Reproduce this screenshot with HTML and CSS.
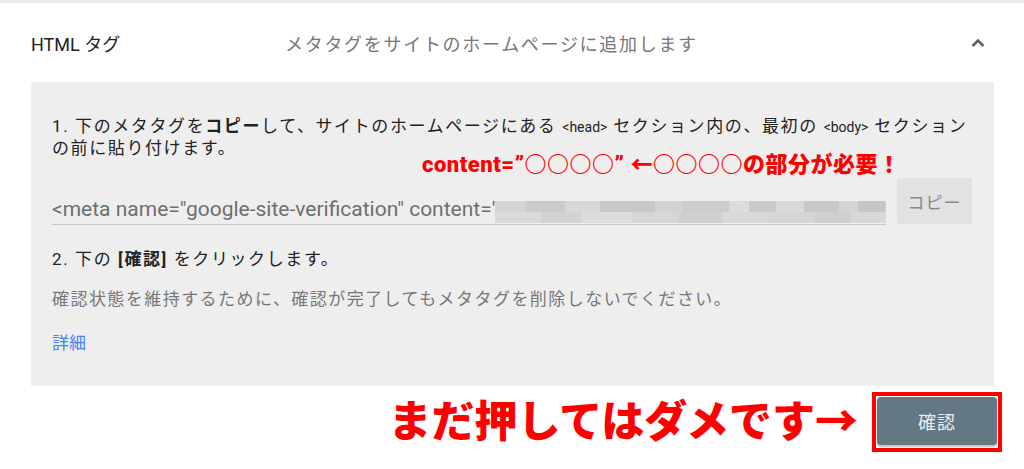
FILE: index.html
```html
<!DOCTYPE html>
<html lang="ja">
<head>
<meta charset="utf-8">
<link rel="stylesheet" href="styles.css">
</head>
<body>
<div class="topbar"></div>
<div class="header">
  <div class="title">HTML タグ</div>
  <div class="desc">メタタグをサイトのホームページに追加します</div>
  <svg class="chev" width="20" height="20" viewBox="0 0 20 20"><path d="M4.5 13 L10 7.5 L15.5 13" fill="none" stroke="#5f6368" stroke-width="2.6"/></svg>
</div>
<div class="panel">
  <p class="step">1. 下のメタタグを<b>コピー</b>して、サイトのホームページにある <span class="code">&lt;head&gt;</span> セクション内の、最初の <span class="code">&lt;body&gt;</span> セクション<br>の前に貼り付けます。</p>
  <div class="note">content=”○○○○” ←○○○○の部分が必要！</div>
  <div class="row">
    <div class="field"><span class="meta">&lt;meta name="google-site-verification" content='</span><span class="blur"></span></div>
    <div class="copy">コピー</div>
  </div>
  <p class="step step2">2. 下の <b>[確認]</b> をクリックします。</p>
  <p class="hint">確認状態を維持するために、確認が完了してもメタタグを削除しないでください。</p>
  <a class="more">詳細</a>
</div>
<div class="footer">
  <div class="warn">まだ押してはダメです→</div>
  <div class="btnbox"><div class="btn">確認</div></div>
</div>
</body>
</html>
```
FILE: styles.css
```css
html, body { margin: 0; padding: 0; background: #fff; }
body {
  font-family: Roboto, "Noto Sans CJK JP", sans-serif;
  color: #202124;
  width: 1024px;
  height: 469px;
  overflow: hidden;
}
.topbar { height: 3px; background: #e8ebef; }
.header {
  display: flex;
  align-items: center;
  height: 79px;
  padding: 0 0 0 31px;
}
.title { font-size: 18px; width: 254px; color: #222; }
.desc { font-size: 18px; color: #777; letter-spacing: 1.7px; flex: 1; }
.chev { margin-right: 36px; }
.panel {
  position: relative;
  margin: 0 30px 0 31px;
  background: #eeeeee;
  padding: 34px 21px 32px 21px;
  height: 238px;
}
.step {
  margin: 0;
  font-size: 17px;
  line-height: 21px;
  letter-spacing: 1.6px;
  color: #222;
  white-space: nowrap;
}
.step b { font-weight: 700; }
.code { font-size: 14px; letter-spacing: 0; }
.note {
  position: absolute;
  left: 391px;
  top: 71px;
  color: #ff0000;
  font-weight: 900;
  font-size: 22px;
  line-height: 24px;
  letter-spacing: 0.5px;
  white-space: nowrap;
}
.row {
  display: flex;
  align-items: flex-end;
  gap: 11px;
  margin-top: 19px;
}
.field {
  width: 834px;
  height: 30px;
  display: flex;
  align-items: center;
  border-bottom: 1px solid #c8c8c8;
  overflow: hidden;
}
.meta { font-size: 21px; color: #6f6f6f; white-space: nowrap; }
.blur {
  flex: 1;
  height: 22px;
  margin-top: 6px;
  background:
    linear-gradient(90deg, #d4d4d4 0 8%, #cbcbcb 8% 18%, #d8d8d8 18% 27%, #c8c8c8 27% 41%, #d3d3d3 41% 48%, #cdcdcd 48% 60%, #dcdcdc 60% 65%, #cacaca 65% 72%, #d9d9d9 72% 79%, #c8c8c8 79% 88%, #d4d4d4 88% 93%, #c6c6c6 93% 100%) top / 100% 50% no-repeat,
    linear-gradient(90deg, #dadada 0 12%, #d2d2d2 12% 22%, #dcdcdc 22% 35%, #d6d6d6 35% 47%, #d0d0d0 47% 58%, #d9d9d9 58% 70%, #d5d5d5 70% 82%, #cfcfcf 82% 91%, #d8d8d8 91% 100%) bottom / 100% 50% no-repeat;
}
.copy {
  width: 75px;
  height: 46px;
  margin-bottom: 1px;
  background: #e2e2e2;
  border-radius: 3px;
  color: #888;
  font-size: 17px;
  display: flex;
  align-items: center;
  justify-content: center;
  letter-spacing: 1px;
}
.step2 { margin-top: 24px; }
.hint {
  margin: 19px 0 0 0;
  font-size: 17px;
  line-height: 21px;
  letter-spacing: 1.45px;
  color: #777;
}
.more {
  display: block;
  margin-top: 23px;
  font-size: 17px;
  line-height: 21px;
  color: #4a80f0;
}
.footer {
  display: flex;
  justify-content: flex-end;
  align-items: center;
  gap: 14px;
  padding: 6px 22px 0 0;
}
.warn {
  color: #ff0000;
  font-size: 43px;
  font-weight: 900;
  line-height: 50px;
  letter-spacing: 0;
}
.btnbox {
  border: 4px solid #ff0000;
  padding: 1px;
  width: 120px;
  height: 50px;
}
.btn {
  height: 48px;
  background: #647883;
  border-radius: 4px;
  box-shadow: 0 2px 2px rgba(0,0,0,0.25);
  color: #e8ecef;
  font-size: 18px;
  display: flex;
  align-items: center;
  justify-content: center;
  letter-spacing: 1px;
}
```
